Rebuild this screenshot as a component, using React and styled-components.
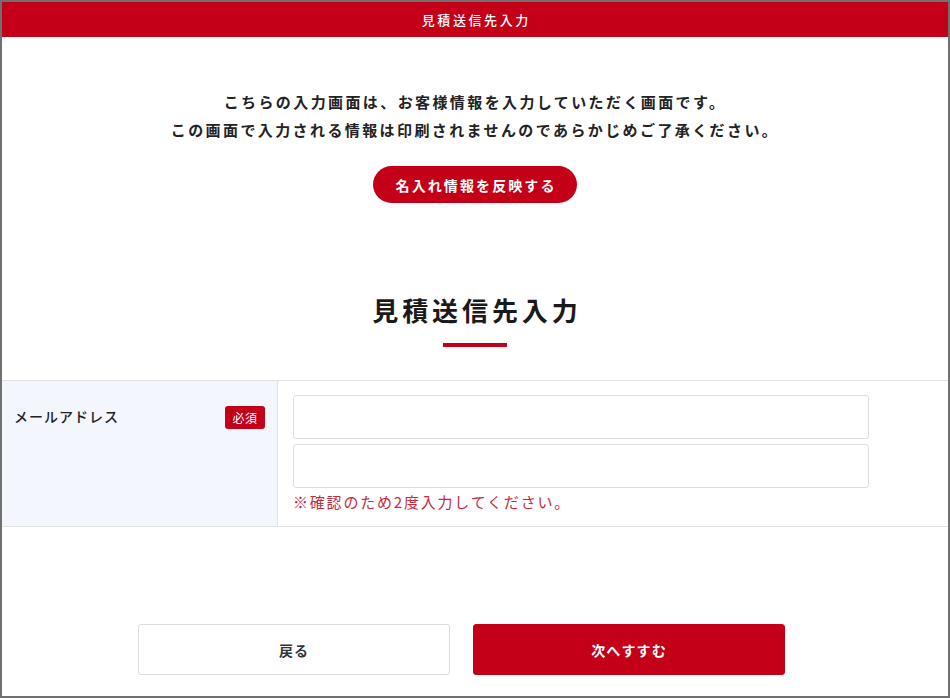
import React from "react";
import styled, { createGlobalStyle } from "styled-components";

const GlobalStyle = createGlobalStyle`
  html, body { margin: 0; padding: 0; background: #fff; }
  body { font-family: "Noto Sans CJK JP", "Noto Sans", sans-serif; color: #222; }
  * { box-sizing: border-box; }
`;

const RED = "#c30017";

const Frame = styled.div`
  width: 950px;
  height: 698px;
  border: 2px solid #707070;
  overflow: hidden;
  display: flex;
  flex-direction: column;
  background: #fff;
`;

const Header = styled.header`
  height: 35px;
  flex: none;
  background: ${RED};
  color: #fff;
  display: flex;
  align-items: center;
  justify-content: center;
  font-size: 13px;
  font-weight: 500;
  letter-spacing: 0.2em;
  text-indent: 0.2em;
`;

const Intro = styled.section`
  display: flex;
  flex-direction: column;
  align-items: center;
  padding-top: 51px;
`;

const IntroText = styled.p`
  margin: 0;
  font-size: 15px;
  font-weight: 700;
  line-height: 28px;
  letter-spacing: 0.16em;
  text-align: center;
  color: #222;
`;

const PillButton = styled.button`
  margin-top: 22px;
  width: 204px;
  height: 37px;
  border: none;
  border-radius: 19px;
  background: ${RED};
  color: #fff;
  font-family: inherit;
  font-size: 14px;
  font-weight: 700;
  letter-spacing: 0.15em;
  text-indent: 0.15em;
  cursor: pointer;
`;

const TitleBlock = styled.div`
  margin-top: 89px;
  display: flex;
  flex-direction: column;
  align-items: center;
`;

const Title = styled.h2`
  margin: 0;
  font-size: 26px;
  line-height: 36px;
  font-weight: 700;
  letter-spacing: 0.15em;
  text-indent: 0.15em;
  color: #1a1a1a;
`;

const Underline = styled.span`
  display: block;
  margin-top: 15px;
  width: 64px;
  height: 4px;
  background: ${RED};
`;

const FormTable = styled.div`
  margin-top: 33px;
  display: grid;
  grid-template-columns: 276px 1fr;
  border-top: 1px solid #e2e2e2;
  border-bottom: 1px solid #e2e2e2;
`;

const LabelCell = styled.div`
  background: #f3f6fc;
  border-right: 1px solid #e2e2e2;
  padding: 25px 12px 0 12px;
  display: flex;
  justify-content: space-between;
  align-items: flex-start;
`;

const Label = styled.span`
  font-size: 14px;
  font-weight: 500;
  letter-spacing: 0.07em;
  line-height: 22px;
  margin-top: -1px;
  color: #222;
`;

const Badge = styled.span`
  width: 40px;
  height: 23px;
  border-radius: 3px;
  background: ${RED};
  color: #fff;
  font-size: 12px;
  display: flex;
  align-items: center;
  justify-content: center;
  letter-spacing: 0.05em;
`;

const FieldCell = styled.div`
  padding: 14px 14px 15px 15px;
  display: flex;
  flex-direction: column;
  gap: 5px;
`;

const Input = styled.input`
  width: 576px;
  height: 44px;
  border: 1px solid #dedede;
  border-radius: 3px;
  background: #fff;
  font-family: inherit;
  font-size: 14px;
  padding: 0 12px;
  outline: none;
`;

const Note = styled.p`
  margin: 0;
  font-size: 15px;
  line-height: 18px;
  letter-spacing: 0.12em;
  color: #c8293c;
`;

const Actions = styled.div`
  margin-top: 97px;
  display: flex;
  justify-content: center;
  gap: 23px;
  padding-right: 27px;
`;

const ActionButton = styled.button`
  width: 312px;
  height: 51px;
  border-radius: 3px;
  border: 1px solid ${(p) => (p.$primary ? RED : "#dddddd")};
  background: ${(p) => (p.$primary ? RED : "#fff")};
  color: ${(p) => (p.$primary ? "#fff" : "#333")};
  font-family: inherit;
  font-size: 14px;
  font-weight: 700;
  letter-spacing: 0.08em;
  cursor: pointer;
`;

export default function App() {
  return (
    <>
      <GlobalStyle />
      <Frame>
        <Header>見積送信先入力</Header>
        <Intro>
          <IntroText>
            こちらの入力画面は、お客様情報を入力していただく画面です。
            <br />
            この画面で入力される情報は印刷されませんのであらかじめご了承ください。
          </IntroText>
          <PillButton type="button">名入れ情報を反映する</PillButton>
        </Intro>
        <TitleBlock>
          <Title>見積送信先入力</Title>
          <Underline />
        </TitleBlock>
        <FormTable>
          <LabelCell>
            <Label>メールアドレス</Label>
            <Badge>必須</Badge>
          </LabelCell>
          <FieldCell>
            <Input type="email" />
            <Input type="email" />
            <Note>※確認のため2度入力してください。</Note>
          </FieldCell>
        </FormTable>
        <Actions>
          <ActionButton type="button">戻る</ActionButton>
          <ActionButton type="button" $primary>
            次へすすむ
          </ActionButton>
        </Actions>
      </Frame>
    </>
  );
}
